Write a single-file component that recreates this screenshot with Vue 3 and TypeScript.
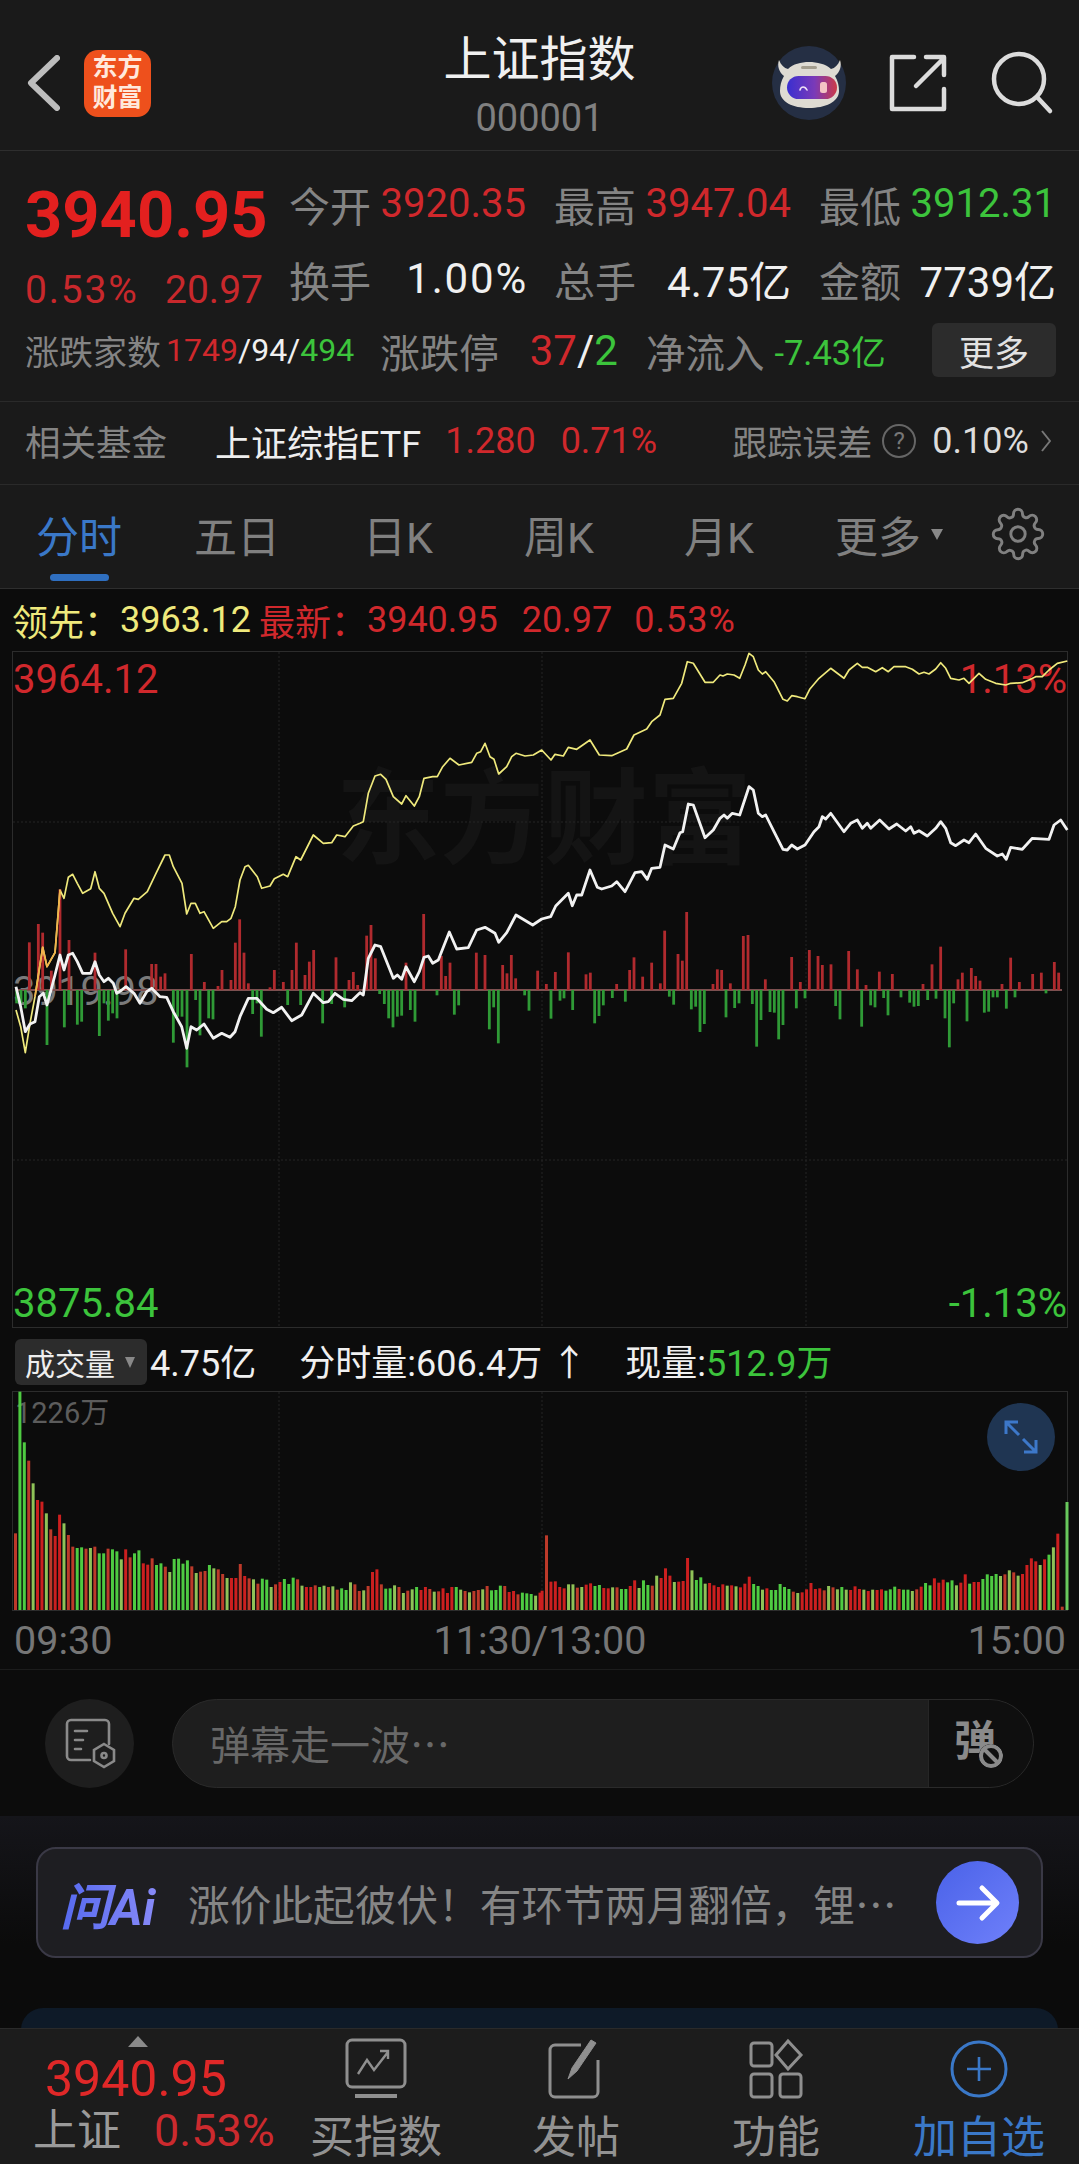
<script setup lang="ts">
// chart data is read off the reference: "x,y" pairs in crop coordinates (3x), origin = crop left edge
const toPoints = (origin: number, raw: string) =>
  raw.trim().split(/\s+/).map((p) => {
    const [x, y] = p.split(',').map(Number)
    return `${(origin + x / 3).toFixed(1)},${(650 + y / 3).toFixed(1)}`
  })

const yellowLine = [
  ...toPoints(0, '48,1080 62,1130 76,1208 90,1120 105,1040 128,892 141,950 165,908 180,720 192,745 205,682 218,673 232,700 248,730 272,716 285,665 298,715 312,730 338,790 360,830 375,790 402,745 415,748 442,725 468,670 495,615 508,615 520,650 546,700 560,792 573,760 586,760 600,790 612,785 640,835 665,815 680,815 693,805 706,770 720,690 735,650 745,646 772,680 785,715 810,708 823,686 850,673 863,680 888,620 902,630 940,555 970,580 995,578 1010,555 1035,560 1060,528 1080,520'),
  ...toPoints(360, '10,515 25,430 45,378 62,373 78,388 100,440 125,462 138,437 163,468 178,440 192,385 218,380 232,380 248,350 270,325 297,345 335,337 350,310 362,305 375,280 390,320 402,328 416,372 440,350 455,320 468,310 495,318 520,315 545,300 573,330 585,313 610,318 625,292 650,298 690,270 718,315 755,317 800,297 822,255 860,237 875,215 900,195 915,148 940,145 965,100 982,35 1000,40 1035,97 1060,97 1080,75'),
  ...toPoints(719, '12,78 25,72 45,75 62,85 78,45 90,10 103,20 118,60 130,72 140,65 165,95 192,148 205,153 218,137 235,140 258,146 272,118 300,85 335,55 375,85 390,60 415,40 430,52 445,52 470,65 490,53 508,65 525,50 560,50 580,58 600,72 615,67 630,72 650,57 665,38 680,55 695,85 720,90 735,85 750,100 780,70 800,88 830,100 860,105 875,100 910,98 930,90 950,80 970,80 990,60 1015,40 1045,33')
].join(' ')

// where the yellow line runs over the red bars it reads orange
const orangeLine = toPoints(0, '105,1040 128,892 141,950 165,908 180,720').join(' ')

const whiteLine = [
  ...toPoints(0, '48,1010 62,1070 76,1145 90,1122 105,1115 118,1040 130,1030 141,1065 165,975 180,915 192,960 205,915 218,910 232,935 248,970 272,970 285,935 298,975 312,995 325,985 340,1000 350,1030 365,1020 378,1010 402,1030 420,1060 440,1025 455,1015 480,1040 500,1042 520,1085 545,1130 560,1195 573,1130 590,1140 612,1122 640,1165 665,1150 690,1162 705,1145 720,1100 745,1045 770,1045 800,1078 820,1088 845,1072 875,1112 888,1105 905,1095 940,1030 970,1058 985,1055 1005,1030 1030,1048 1055,1052 1080,1028'),
  ...toPoints(360, '10,1035 25,925 45,885 62,890 78,930 100,985 112,975 125,988 138,950 163,995 178,965 192,922 205,918 218,940 235,930 268,846 290,897 325,893 350,840 375,832 405,850 416,877 440,848 468,795 518,825 545,807 572,800 587,768 625,730 637,767 650,735 665,735 690,660 712,712 725,717 755,708 770,695 795,725 825,668 845,665 862,688 875,655 900,652 915,585 940,597 960,548 968,545 985,462 1000,465 1035,563 1060,540 1080,505'),
  ...toPoints(719, '15,495 25,505 40,490 62,495 90,410 103,420 118,490 130,500 140,495 165,545 192,598 205,600 218,585 235,597 258,585 285,545 300,530 310,500 320,507 335,490 375,545 395,520 415,510 430,535 445,520 455,535 482,510 510,537 533,522 560,543 575,530 585,550 600,542 625,558 650,535 665,515 680,535 695,578 710,587 735,570 750,578 770,552 800,595 835,618 850,612 862,628 875,592 910,598 940,565 990,568 1005,525 1025,510 1045,540')
].join(' ')

interface Bar { x: number; y: number; h: number; c: string }

const ZERO = 990
const flowBars = (origin: number, up: boolean, raw: string): Bar[] =>
  raw.trim().split(/\s+/).map((p) => {
    const [x, y] = p.split(',').map(Number)
    const end = 650 + y / 3
    return {
      x: origin + x / 3 - 1.4,
      y: up ? end : ZERO,
      h: Math.abs(end - ZERO),
      c: up ? '#b02a2e' : '#2f9a36'
    }
  })

const flow: Bar[] = [
  ...flowBars(0, true, '88,877 115,822 128,848 154,962 180,718 207,870 285,908 377,898 455,942 468,942 482,980 495,970 574,912 613,996 654,1008 666,960 693,990 706,878 719,808 732,908 745,1000 810,1012 823,960 850,996 876,960 889,878 915,975 928,935 941,900 1008,922 1047,990 1060,966 1073,1005'),
  ...flowBars(0, false, '50,1060 63,1060 76,1075 141,1185 193,1132 206,1065 232,1124 245,1115 298,1158 312,1060 325,1112 338,1090 351,1105 520,1178 533,1100 546,1100 561,1252 587,1050 600,1156 626,1105 639,1108 758,1092 771,1060 784,1160 863,1065 902,1065 968,1120 995,1062 1034,1072'),
  ...flowBars(360, true, '20,857 33,825 46,925 138,938 191,792 244,918 257,978 270,938 349,908 375,915 428,945 441,970 454,915 467,985 533,962 559,1002 586,966 625,907 678,973 691,968 770,1002 809,960 822,922 848,980 875,938 901,1000 914,842 954,912 967,932 980,786 1059,1002 1072,958'),
  ...flowBars(360, false, '59,1032 73,1062 86,1105 99,1132 112,1100 125,1097 151,1080 165,1115 231,1036 283,1094 296,1066 388,1138 401,1072 415,1180 494,1036 507,1082 573,1106 600,1052 612,1045 638,1080 704,1120 717,1098 730,1066 757,1044 796,1055 928,1040 941,1064 994,1078 1007,1070 1020,1146 1033,1122'),
  ...flowBars(719, true, '8,960 34,1000 73,858 87,855 139,988 218,921 244,996 271,900 297,918 310,945 336,943 389,903 415,958 441,1005 481,965 520,972 612,1002 639,943 665,890 717,988 730,968 757,954 770,978 783,992 849,1002 875,923 901,996 941,972 967,968 1006,936 1019,968'),
  ...flowBars(719, false, '21,1102 47,1074 60,1060 100,1062 113,1190 126,1110 153,1086 166,1088 179,1168 192,1125 232,1075 258,1045 350,1068 363,1108 428,1130 455,1066 468,1072 494,1044 507,1096 546,1042 572,1058 585,1070 598,1068 626,1050 651,1046 678,1105 691,1192 704,1060 744,1114 796,1088 809,1085 822,1042 835,1042 862,1076 888,1042 981,1030')
]

const volColors: Record<string, string> = { r: '#cc1f1f', g: '#4ecb42', o: '#8fc258', b: '#bd3a2a' }

// colour letter + top of the bar in the crop, 12.8 crop px apart
const volLeft = 'b430 g5 g157 b212 o280 r330 r335 o370 b418 r438 r374 o400 b435 b470 g474 g472 b476 o474 b470 g490 g490 b476 g478 g484 o508 r478 b502 g490 g481 r520 r524 b505 g525 g520 b530 o546 g507 g506 g521 g511 b529 o549 b545 b543 g525 o535 b538 b552 o564 r564 r564 b522 r558 b565 o568 b581 g566 g569 o591 b583 r576 g567 g582 g563 b568 o587 r591 r591 b586 g591 o587 b591 o589 b599 g595 g600 o577 b583 b603 o601 b588 r546 r538 b583 g596 g595 o586 b591 o609 b602 o598 g591 r600 r591 b597 o605 b604 r595 r609 r591 g591 o599 b603 o607 b603 b600 o598 b588 g601 g600 g587 b588 r606 r603 b613 g608 g610 g612 o617 r608'
const volRight = 'r602 b436 r575 r574 r591 r595 o583 o583 b593 o591 r584 r580 g588 g585 r594 r595 o592 b592 g597 g597 r588 r571 o594 g571 g585 b587 o557 r564 r535 r557 o576 r575 r573 r504 o541 g570 g562 o581 r579 r586 r591 r583 o587 r586 o589 r592 r581 r560 g582 g588 o599 r595 g600 g600 g582 g591 g597 b605 o609 r607 r598 r579 r597 r595 b601 o588 b592 o598 g591 o599 r600 r589 r597 o599 r603 o599 r600 r598 g602 g598 g590 b597 g599 g599 o603 b598 r590 g579 g586 r565 r578 r569 g577 g571 o586 r578 r553 g581 r576 r576 g567 g553 g558 g552 o558 b553 o541 b547 o557 r552 r525 r505 r514 o525 r508 g494 o472 r431 b650'

const volBars = (origin: number, startZ: number, raw: string): Bar[] =>
  raw.split(' ').map((item, i) => {
    const top = 1390 + Number(item.slice(1)) / 3
    return {
      x: origin + (startZ + i * 12.8) / 2.904 - 1.5,
      y: top,
      h: 1610 - top,
      c: volColors[item[0]]
    }
  })

const volume: Bar[] = [
  ...volBars(0, 45, volLeft),
  ...volBars(539, 9, volRight),
  { x: 1065.5, y: 1502, h: 108, c: '#68c85c' }
]

const tabs = ['分时', '五日', '日K', '周K', '月K']
const gridX = [279, 542, 806]
</script>

<template>
  <div class="page">
    <header class="top">
      <div class="top-left">
        <svg class="back" width="34" height="56" viewBox="0 0 34 56">
          <path d="M31 3 5 28l26 25" fill="none" stroke="#bdbdbd" stroke-width="6" stroke-linecap="round" stroke-linejoin="round" />
        </svg>
        <div class="logo">东方<br />财富</div>
      </div>
      <div class="title">
        <div class="name">上证指数</div>
        <div class="code">000001</div>
      </div>
      <div class="top-right">
        <svg class="robot" width="74" height="74" viewBox="0 0 74 74">
          <defs>
            <linearGradient id="visor" x1="0" x2="1" y1="0" y2="0">
              <stop offset="0" stop-color="#3a2fd0" />
              <stop offset="0.55" stop-color="#7a3ab8" />
              <stop offset="1" stop-color="#cc3a48" />
            </linearGradient>
          </defs>
          <circle cx="37" cy="37" r="37" fill="#252f44" />
          <path d="M7 14c2 5 5 8 9 9 5-5 13-7 21-7s17 2 22 7c4-1 7-4 9-9 2 6 0 12-5 16 3 5 4 10 4 15 0 11-14 17-30 17S8 56 8 45c0-5 1-10 4-15C7 26 5 20 7 14Z" fill="#dedbd3" />
          <rect x="29" y="20" width="16" height="3" rx="1.5" fill="#a39d8e" />
          <rect x="15" y="30" width="50" height="23" rx="11.5" fill="url(#visor)" />
          <path d="M28 44c1-4 5-4 7 0" fill="none" stroke="#efe0f5" stroke-width="1.6" stroke-linecap="round" />
          <rect x="48" y="36" width="7" height="11" rx="2.5" fill="#f3c4c4" />
        </svg>
        <svg class="share" width="60" height="60" viewBox="0 0 60 60">
          <path d="M26 4H4v52h52V36M28 33 56 5M38 4h18v18" fill="none" stroke="#dcdcdc" stroke-width="4.5" stroke-linecap="round" stroke-linejoin="round" />
        </svg>
        <svg class="search" width="64" height="64" viewBox="0 0 64 64">
          <circle cx="29" cy="28" r="25" fill="none" stroke="#dcdcdc" stroke-width="4.5" />
          <path d="m47 46 13 14" fill="none" stroke="#dcdcdc" stroke-width="4.5" stroke-linecap="round" />
        </svg>
      </div>
    </header>

    <section class="quote">
      <div class="quote-top">
        <div class="price-col">
          <div class="price">3940.95</div>
          <div class="change"><span class="wide-pct">0.53%</span><span>20.97</span></div>
        </div>
        <div class="stats">
          <div class="stat"><span class="lb">今开</span><span class="red">3920.35</span></div>
          <div class="stat"><span class="lb">最高</span><span class="red">3947.04</span></div>
          <div class="stat"><span class="lb">最低</span><span class="green">3912.31</span></div>
          <div class="stat"><span class="lb">换手</span><span class="white big wide-pct">1.00%</span></div>
          <div class="stat"><span class="lb">总手</span><span class="white big">4.75亿</span></div>
          <div class="stat"><span class="lb">金额</span><span class="white big">7739亿</span></div>
        </div>
      </div>
      <div class="quote-bottom">
        <div class="breadth">
          <span class="lb small">涨跌家数</span>
          <span class="nums"><span class="red">1749</span><span class="white">/94/</span><span class="green">494</span></span>
        </div>
        <div class="limit">
          <span class="lb mid">涨跌停</span>
          <span class="limit-num"><span class="red">37</span><span class="white">/</span><span class="green">2</span></span>
        </div>
        <div class="inflow">
          <span class="lb mid">净流入</span>
          <span class="green inflow-num">-7.43亿</span>
        </div>
        <button class="more" type="button">更多</button>
      </div>
    </section>

    <section class="fund">
      <span class="lb fund-label">相关基金</span>
      <span class="fund-name">上证综指ETF</span>
      <span class="red fund-price">1.280</span>
      <span class="red fund-pct">0.71%</span>
      <span class="lb fund-track">跟踪误差</span>
      <span class="help">?</span>
      <span class="fund-val">0.10%</span>
      <svg width="10" height="24" viewBox="0 0 10 24">
        <path d="m1 2 8 10-8 10" fill="none" stroke="#777" stroke-width="2" />
      </svg>
    </section>

    <nav class="tabs">
      <div v-for="(t, i) in tabs" :key="t" class="tab" :class="{ active: i === 0 }">{{ t }}</div>
      <div class="tab tab-more">更多<i class="caret"></i></div>
      <div class="tab">
        <svg width="54" height="54" viewBox="0 0 24 24" fill="none" stroke="#808080" stroke-width="1.3">
          <circle cx="12" cy="12" r="3.2" />
          <path d="M19.4 15a1.65 1.65 0 0 0 .33 1.82l.06.06a2 2 0 0 1 0 2.83 2 2 0 0 1-2.83 0l-.06-.06a1.65 1.65 0 0 0-1.82-.33 1.65 1.65 0 0 0-1 1.51V21a2 2 0 0 1-2 2 2 2 0 0 1-2-2v-.09A1.65 1.65 0 0 0 9 19.4a1.65 1.65 0 0 0-1.82.33l-.06.06a2 2 0 0 1-2.83 0 2 2 0 0 1 0-2.83l.06-.06a1.65 1.65 0 0 0 .33-1.82 1.65 1.65 0 0 0-1.51-1H3a2 2 0 0 1-2-2 2 2 0 0 1 2-2h.09A1.65 1.65 0 0 0 4.6 9a1.65 1.65 0 0 0-.33-1.82l-.06-.06a2 2 0 0 1 0-2.83 2 2 0 0 1 2.83 0l.06.06a1.65 1.65 0 0 0 1.82.33H9a1.65 1.65 0 0 0 1-1.51V3a2 2 0 0 1 2-2 2 2 0 0 1 2 2v.09a1.65 1.65 0 0 0 1 1.51 1.65 1.65 0 0 0 1.82-.33l.06-.06a2 2 0 0 1 2.83 0 2 2 0 0 1 0 2.83l-.06.06a1.65 1.65 0 0 0-.33 1.82V9a1.65 1.65 0 0 0 1.51 1H21a2 2 0 0 1 2 2 2 2 0 0 1-2 2h-.09a1.65 1.65 0 0 0-1.51 1z" />
        </svg>
      </div>
    </nav>

    <div class="leader">
      <span class="yellow">领先：</span><span class="yellow">3963.12</span>
      <span class="red leader-new">最新：</span><span class="red">3940.95</span>
      <span class="red leader-diff">20.97</span><span class="red leader-pct">0.53%</span>
    </div>

    <div class="chart">
      <div class="watermark">东方财富</div>
      <span class="axis tl red">3964.12</span>
      <span class="axis tr red">1.13%</span>
      <span class="axis ml">3919.98</span>
      <span class="axis bl green">3875.84</span>
      <span class="axis br green">-1.13%</span>
      <svg class="plot" width="1079" height="677" viewBox="0 651 1079 677">
        <rect x="12.5" y="651.5" width="1055" height="676" fill="none" stroke="#2c2c2c" />
        <line x1="13" x2="1067" y1="822" y2="822" class="grid" />
        <line x1="13" x2="1067" y1="1160" y2="1160" class="grid" />
        <line v-for="x in gridX" :key="x" :x1="x" :x2="x" y1="652" y2="1327" class="grid" />
        <rect x="15" y="989" width="1047" height="2" fill="#7d5050" />
        <rect v-for="(b, i) in flow" :key="i" :x="b.x" :y="b.y" width="2.8" :height="b.h" :fill="b.c" />
        <polyline :points="yellowLine" fill="none" stroke="#efe97c" stroke-width="1.7" stroke-linejoin="round" />
        <polyline :points="orangeLine" fill="none" stroke="#f2b34a" stroke-width="1.7" stroke-linejoin="round" />
        <polyline :points="whiteLine" fill="none" stroke="#f2f2f2" stroke-width="2.8" stroke-linejoin="round" />
      </svg>
    </div>

    <div class="vol-head">
      <div class="vol-pill">成交量<i class="caret"></i></div>
      <span class="white vol-total">4.75亿</span>
      <span class="white vol-min">分时量:606.4万 ↑</span>
      <span class="white vol-now">现量:<span class="green">512.9万</span></span>
    </div>

    <div class="vol-chart">
      <span class="vol-max">1226万</span>
      <svg class="plot" width="1079" height="220" viewBox="0 1391 1079 220">
        <rect x="12.5" y="1391.5" width="1055" height="219" fill="none" stroke="#2c2c2c" />
        <line v-for="x in gridX" :key="x" :x1="x" :x2="x" y1="1392" y2="1610" class="grid" />
        <rect v-for="(b, i) in volume" :key="i" :x="b.x" :y="b.y" width="3" :height="b.h" :fill="b.c" />
      </svg>
      <button class="expand" type="button">
        <svg width="36" height="36" viewBox="0 0 36 36" fill="none" stroke="#3d78c9" stroke-width="3">
          <path d="M3 15V3h12M3 3l13 13M33 21v12H21M33 33 20 20" />
        </svg>
      </button>
    </div>

    <div class="times">
      <span>09:30</span><span>11:30/13:00</span><span>15:00</span>
    </div>

    <div class="danmu">
      <div class="danmu-btn">
        <svg width="54" height="54" viewBox="0 0 54 54" fill="none" stroke="#8a8a8a" stroke-width="2.6">
          <path d="M27 43H8a4 4 0 0 1-4-4V7a4 4 0 0 1 4-4h34a4 4 0 0 1 4 4v20" stroke-linecap="round" />
          <path d="M12 14h12M12 23h8M12 32h6" stroke-linecap="round" />
          <path d="m41 27 10 6v11l-10 6-10-6V33z" />
          <circle cx="41" cy="38.5" r="2.5" />
        </svg>
      </div>
      <div class="danmu-input">
        <span class="danmu-text">弹幕走一波…</span>
        <div class="danmu-send">
          <span class="danmu-char">弹</span>
          <svg class="danmu-off" width="24" height="24" viewBox="0 0 24 24">
            <circle cx="12" cy="12" r="10" fill="none" stroke="#8a8a8a" stroke-width="4" />
            <path d="m5 5 14 14" stroke="#8a8a8a" stroke-width="4" />
          </svg>
        </div>
      </div>
    </div>

    <div class="band">
      <div class="ai-card">
        <span class="ai-logo">问Ai</span>
        <span class="ai-text">涨价此起彼伏！有环节两月翻倍，锂…</span>
        <div class="ai-go">
          <svg width="46" height="40" viewBox="0 0 46 40" fill="none" stroke="#fff" stroke-width="5" stroke-linecap="round" stroke-linejoin="round">
            <path d="M4 20h37M27 5l15 15-15 15" />
          </svg>
        </div>
      </div>
      <div class="next-card"></div>
    </div>

    <footer class="bottom">
      <div class="bottom-quote">
        <i class="up"></i>
        <div class="bottom-price">3940.95</div>
        <div class="bottom-row"><span class="bottom-name">上证</span><span class="bottom-pct">0.53%</span></div>
      </div>
      <div class="bottom-item">
        <svg width="62" height="62" viewBox="0 0 62 62" fill="none" stroke="#8f8f8f" stroke-width="3">
          <rect x="2" y="2" width="58" height="47" rx="5" />
          <path d="M10 58h42" stroke-width="4" />
          <path d="m13 36 9-14 7 10 14-18M35 13h8v8" stroke-width="2.4" />
        </svg>
        <span>买指数</span>
      </div>
      <div class="bottom-item">
        <svg width="62" height="62" viewBox="0 0 62 62" fill="none" stroke="#8f8f8f" stroke-width="3">
          <path d="M36 7H10a5 5 0 0 0-5 5v42a5 5 0 0 0 5 5h38a5 5 0 0 0 5-5V22" />
          <path d="m23 41 4-11 19-28 5 3-19 28z" fill="#8f8f8f" stroke-width="1" />
        </svg>
        <span>发帖</span>
      </div>
      <div class="bottom-item">
        <svg width="62" height="62" viewBox="0 0 62 62" fill="none" stroke="#8f8f8f" stroke-width="3">
          <rect x="6" y="5" width="21" height="23" rx="3" />
          <path d="m43 3 13 14-13 14-12-14z" />
          <rect x="6" y="36" width="21" height="23" rx="3" />
          <rect x="35" y="36" width="21" height="23" rx="3" />
        </svg>
        <span>功能</span>
      </div>
      <div class="bottom-item blue">
        <svg width="62" height="62" viewBox="0 0 62 62" fill="none" stroke="#3a78c8" stroke-width="3">
          <circle cx="31" cy="31" r="27" />
          <path d="M31 19v24M19 31h24" stroke-width="2.6" />
        </svg>
        <span>加自选</span>
      </div>
    </footer>
  </div>
</template>

<style scoped>
.page {
  width: 1079px;
  background: #1a1a1a;
  color: #ddd;
  font-family: Roboto, "Noto Sans CJK SC", sans-serif;
}

.red { color: #d0282c; }
.green { color: #3cc43c; }
.white { color: #f0f0f0; }
.yellow { color: #efe97c; }
.lb { color: #848484; }

.top {
  height: 150px;
  display: grid;
  grid-template-columns: 1fr auto 1fr;
  border-bottom: 1px solid #2e2e2e;
}

.top-left {
  display: flex;
  align-items: center;
  padding-left: 26px;
  gap: 24px;
  margin-top: 16px;
}

.logo {
  width: 67px;
  height: 67px;
  border-radius: 14px;
  background: #ee501c;
  color: #ffe9dc;
  font-size: 25px;
  font-weight: 700;
  line-height: 30px;
  text-align: center;
  padding-top: 3px;
  box-sizing: border-box;
}

.title {
  text-align: center;
}

.name {
  font-size: 48px;
  line-height: 56px;
  margin-top: 32px;
  color: #f0f0f0;
}

.code {
  font-size: 38px;
  line-height: 44px;
  margin-top: 8px;
  color: #808080;
}

.top-right {
  display: flex;
  justify-content: flex-end;
  align-items: center;
  margin-top: 16px;
  padding-right: 25px;
}

.robot { margin-right: 42px; }
.search { margin-left: 42px; }

.quote {
  height: 235px;
  padding: 15px 23px 0 25px;
  border-bottom: 1px solid #2a2a2a;
}

.quote-top {
  display: flex;
  height: 157px;
}

.price-col {
  width: 238px;
  margin-right: 26px;
  padding-top: 12px;
}

.price {
  font-size: 65px;
  font-weight: 700;
  line-height: 75px;
  color: #e3201f;
}

.change {
  display: flex;
  justify-content: space-between;
  font-size: 39px;
  line-height: 75px;
  color: #c8282c;
}

.wide-pct { letter-spacing: 1.8px; margin-right: -2px; }
.change .wide-pct { margin-right: 0; }

.stats {
  display: grid;
  grid-template-columns: repeat(3, 237px);
  grid-auto-rows: 75px;
  column-gap: 28px;
  height: 150px;
}

.stat {
  display: flex;
  justify-content: space-between;
  align-items: center;
  font-size: 40px;
}

.stat .lb { font-size: 41px; }
.stat .big { font-size: 42px; }

.quote-bottom {
  display: flex;
  align-items: center;
  height: 54px;
}

.breadth, .limit, .inflow {
  display: flex;
  align-items: center;
}

.small { font-size: 34px; }
.mid { font-size: 39.5px; }

.nums {
  font-size: 32px;
  margin-left: 5px;
}

.limit { margin-left: 26px; }

.limit-num {
  font-size: 42px;
  margin-left: 31px;
}

.inflow { margin-left: 28px; }

.inflow-num {
  font-size: 34.5px;
  margin-left: 10px;
}

.more {
  margin-left: auto;
  width: 124px;
  height: 54px;
  background: #2c2c2c;
  border: none;
  border-radius: 6px;
  color: #e2e2e2;
  font-family: inherit;
  font-size: 35px;
  padding: 0;
}

.fund {
  height: 77px;
  padding: 0 0 5px 25px;
  display: flex;
  align-items: center;
  font-size: 36px;
  border-bottom: 1px solid #2a2a2a;
}

.fund-label { font-size: 35.5px; }
.fund-name { margin-left: 48px; color: #eee; }
.fund-price { margin-left: 24px; }
.fund-pct { margin-left: 25px; }
.fund-track { margin-left: 75px; font-size: 35px; }

.help {
  width: 30px;
  height: 30px;
  border: 2px solid #666;
  border-radius: 50%;
  margin-left: 10px;
  color: #777;
  font-size: 24px;
  line-height: 30px;
  text-align: center;
}

.fund-val {
  margin-left: 16px;
  margin-right: 12px;
  color: #ddd;
}

.tabs {
  height: 103px;
  display: grid;
  grid-template-columns: 158px 158px 164px 158px 162px 178px 80px;
  border-bottom: 1px solid #2e2e2e;
}

.tab {
  position: relative;
  display: flex;
  justify-content: center;
  align-items: center;
  height: 103px;
  padding-bottom: 5px;
  box-sizing: border-box;
  font-size: 43px;
  color: #808080;
}

.tab.active { color: #3a78c8; }

.tab.active::after {
  content: "";
  position: absolute;
  left: 50px;
  top: 89px;
  width: 59px;
  height: 7px;
  border-radius: 4px;
  background: #2f6fc0;
}

.caret {
  display: inline-block;
  width: 0;
  height: 0;
  border-left: 6px solid transparent;
  border-right: 6px solid transparent;
  border-top: 11px solid #888;
  margin-left: 10px;
}

.leader {
  height: 62px;
  background: #0c0c0c;
  display: flex;
  align-items: center;
  font-size: 36px;
  padding-left: 12px;
}

.leader-new { margin-left: 8px; }
.leader-diff { margin-left: 24px; }
.leader-pct { margin-left: 22px; letter-spacing: 1px; }

.chart {
  position: relative;
  height: 677px;
  background: #0c0c0c;
  overflow: hidden;
}

.plot {
  position: relative;
  display: block;
}

.grid {
  stroke: #242424;
  stroke-width: 1;
  stroke-dasharray: 2 2;
}

.watermark {
  position: absolute;
  left: 336px;
  top: 105px;
  font-size: 104px;
  line-height: 130px;
  font-weight: 700;
  color: #141414;
  white-space: nowrap;
}

.axis {
  position: absolute;
  font-size: 40px;
  line-height: 44px;
}

.tl { left: 13px; top: 7px; }
.tr { right: 12px; top: 7px; }
.ml { left: 13px; top: 319px; color: #7a7a7a; }
.bl { left: 13px; top: 631px; }
.br { right: 12px; top: 631px; }

.vol-head {
  height: 63px;
  background: #0c0c0c;
  display: flex;
  align-items: center;
  font-size: 36px;
  padding-left: 15px;
}

.vol-pill {
  width: 132px;
  height: 46px;
  margin-top: 5px;
  border-radius: 6px;
  background: #2c2c2c;
  color: #eee;
  font-size: 30px;
  display: flex;
  align-items: center;
  padding-left: 10px;
  box-sizing: border-box;
}

.vol-pill .caret {
  border-left-width: 5px;
  border-right-width: 5px;
}

.vol-total { margin-left: 3px; }
.vol-min { margin-left: 43px; }
.vol-now { margin-left: 38px; }

.vol-chart {
  position: relative;
  height: 220px;
  background: #0c0c0c;
}

.vol-max {
  position: absolute;
  left: 15px;
  top: 5px;
  font-size: 29px;
  line-height: 34px;
  color: #5c5c5c;
}

.expand {
  position: absolute;
  left: 987px;
  top: 12px;
  width: 68px;
  height: 68px;
  border: none;
  border-radius: 50%;
  background: #1f3552;
  padding: 0;
  display: flex;
  justify-content: center;
  align-items: center;
}

.times {
  height: 58px;
  background: #0c0c0c;
  display: flex;
  justify-content: space-between;
  align-items: center;
  padding: 0 13px 0 14px;
  font-size: 39.5px;
  color: #767676;
  border-bottom: 1px solid #1c1c1c;
}

.danmu {
  height: 146px;
  background: #0c0c0c;
  display: flex;
  align-items: flex-start;
  padding: 29px 0 0 45px;
  box-sizing: border-box;
}

.danmu-btn {
  width: 89px;
  height: 89px;
  border-radius: 50%;
  background: #1e1e1e;
  display: flex;
  justify-content: center;
  align-items: center;
}

.danmu-input {
  width: 862px;
  height: 89px;
  margin-left: 38px;
  border: 1px solid #2a2a2a;
  border-radius: 45px;
  background: #1e1e1e;
  box-sizing: border-box;
  display: flex;
  justify-content: space-between;
  overflow: hidden;
}

.danmu-text {
  padding-left: 37px;
  font-family: "Noto Sans CJK SC", sans-serif;
  font-size: 40px;
  line-height: 87px;
  color: #686868;
}

.danmu-send {
  position: relative;
  width: 105px;
  background: #0f0f0f;
  border-left: 1px solid #262626;
  color: #8a8a8a;
  font-size: 42px;
  font-weight: 700;
  line-height: 84px;
  padding-left: 25px;
  box-sizing: border-box;
}

.danmu-off {
  position: absolute;
  left: 50px;
  top: 44px;
  background: #0f0f0f;
  border-radius: 50%;
}

.band {
  height: 212px;
  padding-top: 31px;
  box-sizing: border-box;
  overflow: hidden;
  background: linear-gradient(#15151a, #0b0b0b 60%);
}

.ai-card {
  width: 1007px;
  height: 111px;
  margin-left: 36px;
  border: 2px solid #3a3946;
  border-radius: 20px;
  background: #1e1e22;
  box-sizing: border-box;
  display: flex;
  align-items: center;
}

.ai-logo {
  width: 126px;
  padding-left: 22px;
  box-sizing: border-box;
  font-size: 50px;
  font-weight: 700;
  font-style: italic;
  white-space: nowrap;
  background: linear-gradient(90deg, #4a62ee, #8b8cf8);
  -webkit-background-clip: text;
  background-clip: text;
  color: transparent;
}

.ai-text {
  margin-left: 24px;
  width: 712px;
  font-family: "Noto Sans CJK SC", sans-serif;
  font-size: 41.7px;
  color: #858585;
  white-space: nowrap;
}

.ai-go {
  width: 83px;
  height: 83px;
  margin-left: 36px;
  border-radius: 50%;
  background: linear-gradient(135deg, #4a62e8, #6f80fa);
  display: flex;
  justify-content: center;
  align-items: center;
}

.next-card {
  width: 1037px;
  height: 40px;
  margin: 50px 0 0 21px;
  border-radius: 22px 22px 0 0;
  background: #0e1a28;
}

.bottom {
  height: 136px;
  background: #1c1c1c;
  border-top: 1px solid #2a2a2a;
  box-sizing: border-box;
  display: flex;
  overflow: hidden;
}

.bottom-quote {
  width: 276px;
  padding-left: 33px;
  box-sizing: border-box;
}

.up {
  display: block;
  width: 0;
  height: 0;
  margin: 7px 0 0 95px;
  border-left: 10px solid transparent;
  border-right: 10px solid transparent;
  border-bottom: 11px solid #8a8a8a;
}

.bottom-price {
  margin: 7px 0 0 12px;
  font-size: 50px;
  line-height: 50px;
  color: #e02828;
}

.bottom-row {
  display: flex;
  align-items: center;
  line-height: 48px;
  margin-top: 3px;
}

.bottom-name {
  font-size: 44px;
  color: #9a9a9a;
}

.bottom-pct {
  margin-left: 33px;
  font-size: 45px;
  color: #cc2a2e;
}

.bottom-item {
  width: 200px;
  display: flex;
  flex-direction: column;
  align-items: center;
  padding-top: 9px;
  font-size: 44px;
  line-height: 44px;
  color: #929292;
}

.bottom-item svg {
  margin-bottom: 16px;
  flex: none;
}

.bottom-item.blue { margin-left: 3px; }

.blue { color: #3a78c8; }
</style>
